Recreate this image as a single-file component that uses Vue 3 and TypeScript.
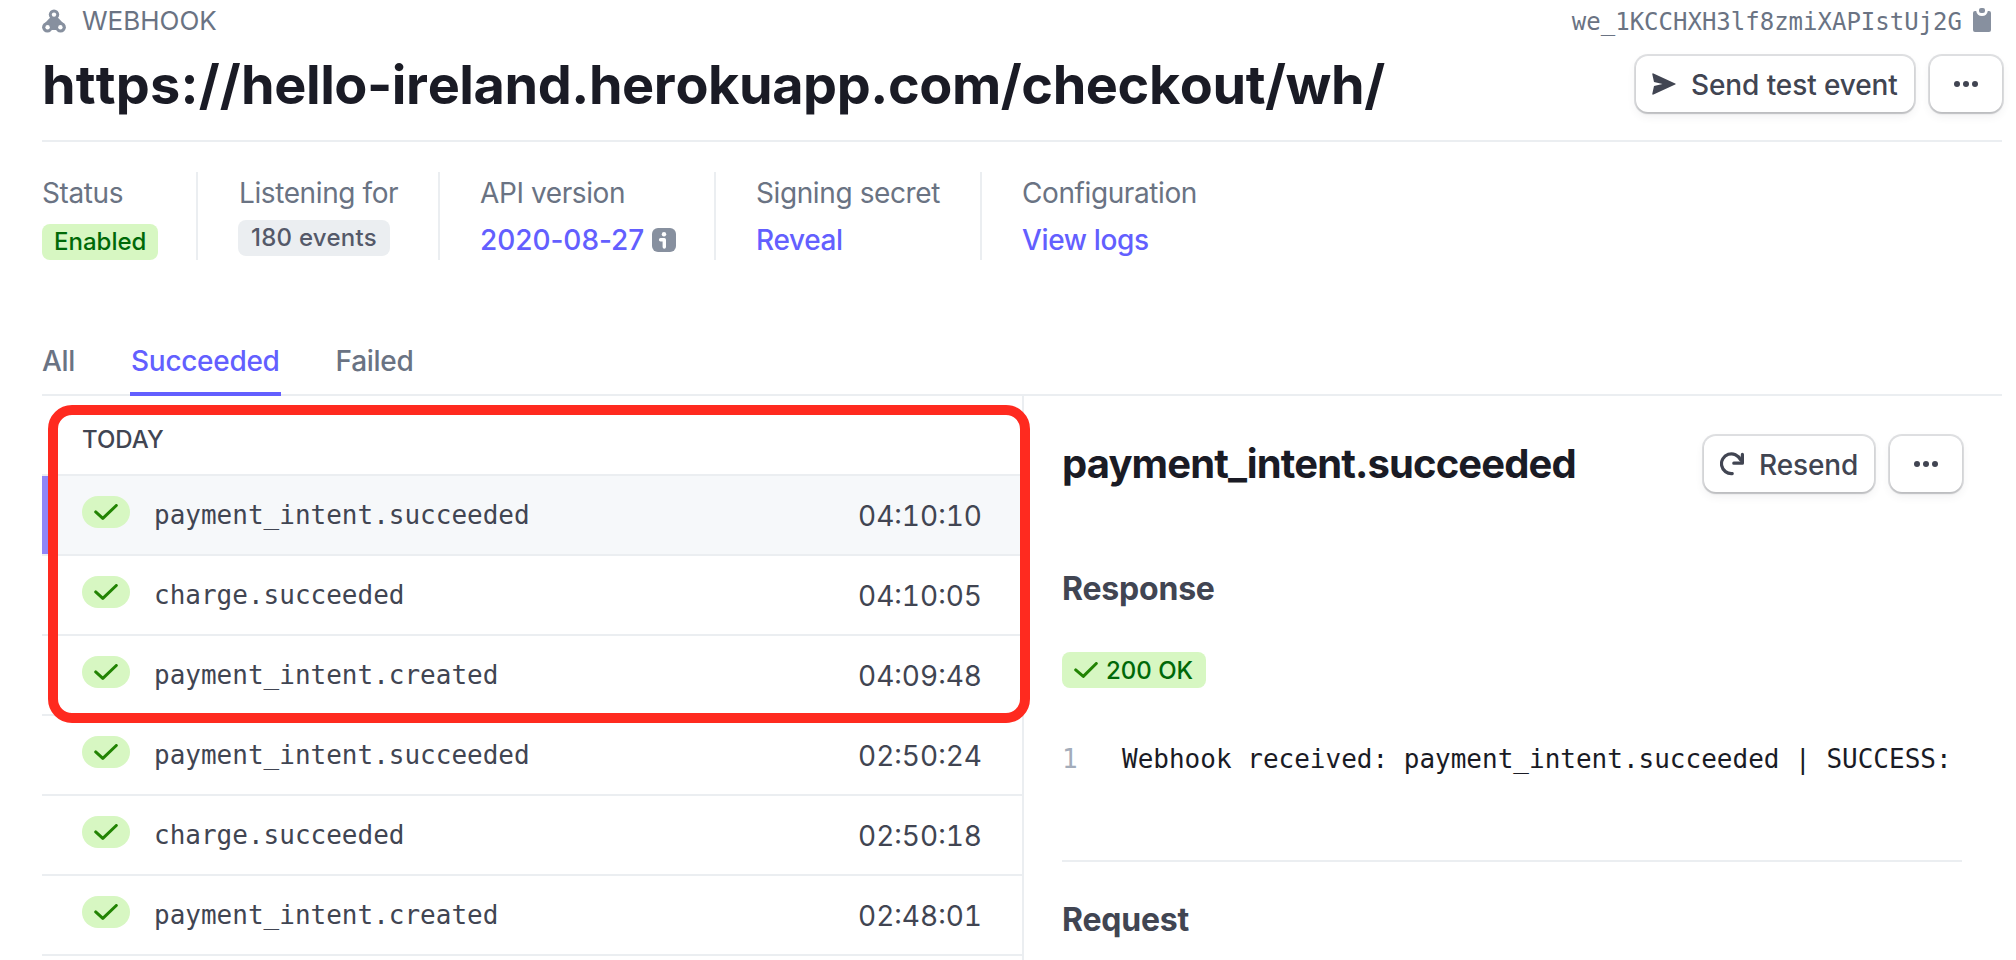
<script setup lang="ts">
interface WebhookEvent {
  name: string
  time: string
}

const tabs: string[] = ['All', 'Succeeded', 'Failed']
const activeTab = 'Succeeded'

const events: WebhookEvent[] = [
  { name: 'payment_intent.succeeded', time: '04:10:10' },
  { name: 'charge.succeeded', time: '04:10:05' },
  { name: 'payment_intent.created', time: '04:09:48' },
  { name: 'payment_intent.succeeded', time: '02:50:24' },
  { name: 'charge.succeeded', time: '02:50:18' },
  { name: 'payment_intent.created', time: '02:48:01' },
]
</script>

<template>
  <main class="page">
    <div class="eyebrow">
      <svg class="icon-webhook" viewBox="0 0 24 24" width="24" height="24">
        <path d="M8.2 8.5 L15.8 8.5 L21.5 14.5 L15 21 H9 L2.5 14.5 Z" />
        <circle cx="12" cy="5.6" r="5.2" />
        <circle cx="5.4" cy="18.3" r="5.3" />
        <circle cx="18.6" cy="18.3" r="5.3" />
        <circle class="hole" cx="12" cy="5.6" r="2.2" />
        <circle class="hole" cx="5.6" cy="18.2" r="2.2" />
        <circle class="hole" cx="18.4" cy="18.2" r="2.2" />
        <path class="hole" d="M9.6 24 Q12 19.6 14.4 24 Z" />
      </svg>
      <span class="kind">WEBHOOK</span>
      <span class="endpoint-id">we_1KCCHXH3lf8zmiXAPIstUj2G</span>
      <svg class="icon-clip" viewBox="0 0 18 24" width="18" height="24">
        <path d="M0 5 Q0 3 2 3 H3.2 Q4 8 9 8 Q14 8 14.8 3 H16 Q18 3 18 5 V22 Q18 24 16 24 H2 Q0 24 0 22 Z" />
        <rect x="6" y="0" width="6" height="5" rx="2" />
      </svg>
    </div>

    <header class="heading">
      <h1><span class="scheme">https://</span>hello-ireland.herokuapp.com/checkout/wh/</h1>
      <div class="actions">
        <button class="btn send">
          <svg viewBox="0 0 24 24" width="24" height="24">
            <path d="M0.3 2.2 Q0.2 0.9 1.5 1.4 L23.2 11.4 Q24.3 12 23.2 12.6 L1.5 22.6 Q0.2 23.1 0.3 21.8 L2 14 L10.5 12 L2 10 Z" />
          </svg>
          <span>Send test event</span>
        </button>
        <button class="btn more">
          <svg viewBox="0 0 24 6" width="24" height="6">
            <circle cx="3" cy="3" r="3" /><circle cx="12" cy="3" r="3" /><circle cx="21" cy="3" r="3" />
          </svg>
        </button>
      </div>
    </header>

    <dl class="details">
      <div class="cell status">
        <dt>Status</dt>
        <dd class="low"><span class="badge green">Enabled</span></dd>
      </div>
      <div class="cell listening">
        <dt>Listening for</dt>
        <dd class="high"><span class="badge gray">180 events</span></dd>
      </div>
      <div class="cell version">
        <dt>API version</dt>
        <dd>
          <a class="date">2020-08-27</a>
          <svg class="icon-info" viewBox="0 0 24 24" width="24" height="24">
            <rect width="24" height="24" rx="6" />
            <circle class="mark" cx="12" cy="6.2" r="2.2" />
            <path class="stroke" d="M8.6 11.7 H12.3 V19" />
          </svg>
        </dd>
      </div>
      <div class="cell secret">
        <dt>Signing secret</dt>
        <dd><a>Reveal</a></dd>
      </div>
      <div class="cell config">
        <dt>Configuration</dt>
        <dd><a>View logs</a></dd>
      </div>
    </dl>

    <nav class="tabs">
      <a v-for="tab in tabs" :key="tab" class="tab" :class="{ active: tab === activeTab }">{{ tab }}</a>
    </nav>

    <div class="body">
      <section class="list">
        <div class="day">TODAY</div>
        <div v-for="(event, i) in events" :key="i" class="row" :class="{ selected: i === 0 }">
          <span class="pill">
            <svg class="check" viewBox="0 0 24 16" width="24" height="16">
              <path d="M1.7 7.9 L8.8 14.4 L22.3 1.5" />
            </svg>
          </span>
          <span class="name">{{ event.name }}</span>
          <time>{{ event.time }}</time>
        </div>
      </section>

      <section class="detail">
        <div class="detail-head">
          <h2>payment_intent.succeeded</h2>
          <div class="actions">
            <button class="btn resend">
              <svg viewBox="0 0 24 24" width="24" height="24">
                <path class="arc" d="M12.2 21.6 A9.9 9.9 0 1 1 20.4 7.6" />
                <path class="arc" d="M22.4 2.4 V11.2 H13.8" />
                <path d="M23 3.4 V12 H14 L20 10 Z" />
              </svg>
              <span>Resend</span>
            </button>
            <button class="btn more">
              <svg viewBox="0 0 24 6" width="24" height="6">
                <circle cx="3" cy="3" r="3" /><circle cx="12" cy="3" r="3" /><circle cx="21" cy="3" r="3" />
              </svg>
            </button>
          </div>
        </div>
        <h3 class="response">Response</h3>
        <div class="badge green code">
          <svg class="check" viewBox="0 0 24 16" width="24" height="16">
            <path d="M1.7 7.9 L9.3 14.4 L22.3 1.5" />
          </svg>
          <span>200 OK</span>
        </div>
        <div class="output">
          <span class="line-no">1</span>
          <code>Webhook received: payment_intent.succeeded | SUCCESS:</code>
        </div>
        <h3 class="request">Request</h3>
      </section>

      <div class="highlight"></div>
    </div>
  </main>
</template>

<style>
body {
  background: #fff;
}
</style>

<style scoped>
.page {
  box-sizing: border-box;
  width: 2016px;
  height: 960px;
  padding: 0 14px 0 42px;
  overflow: hidden;
  font-family: Inter, sans-serif;
  font-size: 28px;
  color: #414552;
}
.page * {
  box-sizing: border-box;
}
h1,
h2,
h3,
dl,
dd {
  margin: 0;
}
svg {
  display: block;
  flex: none;
  fill: currentColor;
}
.hole,
.mark {
  fill: #fff;
}

.eyebrow {
  display: flex;
  align-items: center;
  height: 42px;
  font-size: 24px;
  color: #6a7383;
}
.icon-webhook,
.icon-clip,
.icon-info {
  color: #87909f;
}
.kind {
  margin-left: 16px;
  padding-bottom: 1px;
  font-size: 26px;
}
.endpoint-id {
  margin-left: auto;
  padding-top: 1px;
  font-family: 'DejaVu Sans Mono', monospace;
}
.icon-clip {
  margin: 0 11px 2px 11px;
}

.heading {
  display: flex;
  justify-content: space-between;
  height: 100px;
  padding-top: 14px;
  border-bottom: 2px solid #ebeef1;
}
h1 {
  font-size: 54px;
  line-height: 57px;
  font-weight: 700;
  font-kerning: none;
  letter-spacing: -0.43px;
  color: #1a1b25;
  white-space: nowrap;
}
.scheme {
  letter-spacing: 0.2px;
}
.actions {
  display: flex;
  gap: 16px;
}
.btn {
  display: flex;
  align-items: center;
  height: 56px;
  padding: 0 16px;
  border: 0;
  border-radius: 12px;
  background: #fff;
  box-shadow:
    0 2px 2px rgba(0, 0, 0, 0.12),
    0 0 0 2px rgba(64, 68, 82, 0.16),
    0 4px 10px rgba(64, 68, 82, 0.08);
  font: 500 28px/56px Inter, sans-serif;
  letter-spacing: -0.1px;
  color: #414552;
  white-space: nowrap;
}
.btn svg + span {
  margin-left: 15px;
  padding-top: 1px;
}
.send {
  width: 278px;
}
.resend {
  width: 170px;
}
.more {
  width: 72px;
  justify-content: center;
}

.details {
  display: flex;
  height: 118px;
  padding-top: 30px;
}
.cell {
  height: 88px;
  margin-right: 40px;
  border-right: 2px solid #ebeef1;
  white-space: nowrap;
}
.status {
  width: 156px;
}
.listening {
  width: 202px;
}
.version {
  width: 236px;
}
.secret {
  width: 226px;
}
.config {
  border: 0;
}
dt {
  height: 48px;
  line-height: 42px;
  letter-spacing: -0.4px;
  color: #6a7383;
}
.listening dt {
  padding-left: 1px;
}
dd {
  display: flex;
  align-items: center;
  height: 40px;
  line-height: 40px;
}
dd a {
  color: #635fff;
  font-weight: 500;
  letter-spacing: -0.35px;
}
dd .date {
  letter-spacing: -0.05px;
}
.low {
  align-items: flex-end;
}
.high {
  align-items: flex-start;
}
.badge {
  height: 36px;
  padding: 0 12px;
  border-radius: 8px;
  font-size: 24px;
  line-height: 35px;
  font-weight: 500;
}
.green {
  background: #d7f7c2;
  color: #006908;
}
.gray {
  width: 152px;
  padding-left: 13px;
  background: #ebeef1;
  color: #545969;
  letter-spacing: 0.25px;
}
.icon-info {
  margin-left: 8px;
}
.stroke {
  fill: none;
  stroke: #fff;
  stroke-width: 3.4;
  stroke-linecap: round;
  stroke-linejoin: round;
}

.tabs {
  display: flex;
  gap: 54px;
  height: 72px;
  margin-top: 64px;
  box-shadow: inset 0 -2px #ebeef1;
}
.tab {
  height: 72px;
  padding: 0 1px;
  line-height: 74px;
  font-weight: 500;
  letter-spacing: -0.3px;
  color: #6a7383;
}
.tab:first-child {
  padding-left: 0;
}
.tab.active {
  color: #635fff;
  box-shadow: inset 0 -4px #635fff;
}

.body {
  position: relative;
  display: grid;
  grid-template-columns: 982px 1fr;
  height: 564px;
}
.list {
  border-right: 2px solid #ebeef1;
}
.day {
  height: 80px;
  padding: 25px 40px 0;
  border-bottom: 2px solid #ebeef1;
  font-size: 24px;
  line-height: 38px;
  font-weight: 500;
}
.row {
  display: flex;
  align-items: center;
  height: 80px;
  padding: 0 40px;
  border-bottom: 2px solid #ebeef1;
}
.selected {
  background: #f6f8fa;
  box-shadow: inset 8px 0 #9086f8;
}
.pill {
  display: flex;
  align-items: center;
  justify-content: center;
  width: 48px;
  height: 32px;
  margin-bottom: 6px;
  border-radius: 16px;
  background: #d7f7c2;
}
.check {
  fill: none;
  stroke: #228403;
  stroke-width: 3;
  stroke-linecap: round;
  stroke-linejoin: round;
}
.name {
  margin-left: 24px;
  font: 26px/78px 'DejaVu Sans Mono', monospace;
}
time {
  margin-left: auto;
  padding-top: 2px;
  font-variant-numeric: tabular-nums;
}

.detail {
  padding: 38px 40px 0 38px;
}
.detail-head {
  display: flex;
  justify-content: space-between;
  height: 60px;
  padding-top: 2px;
}
h2 {
  font-size: 40px;
  line-height: 56px;
  font-weight: 700;
  letter-spacing: -0.87px;
  color: #1a1b25;
}
h3 {
  font-size: 32px;
  line-height: 40px;
  font-weight: 700;
  letter-spacing: -0.2px;
}
.response {
  margin-top: 75px;
}
.code {
  display: inline-flex;
  align-items: center;
  gap: 8px;
  width: 144px;
  margin-top: 43px;
  white-space: nowrap;
}
.output {
  display: flex;
  height: 174px;
  padding-top: 51px;
  border-bottom: 2px solid #ebeef1;
  font: 26px/40px 'DejaVu Sans Mono', monospace;
  color: #1a1b25;
  white-space: nowrap;
}
.line-no {
  width: 60px;
  color: #a3acba;
}
.output code {
  font: inherit;
}
.request {
  margin-top: 38px;
}

.arc {
  fill: none;
  stroke: currentColor;
  stroke-width: 3.2;
  stroke-linecap: round;
  stroke-linejoin: round;
}

.highlight {
  position: absolute;
  left: 6px;
  top: 9px;
  width: 982px;
  height: 318px;
  border: 10px solid #ff2a1f;
  border-radius: 24px;
}
</style>
